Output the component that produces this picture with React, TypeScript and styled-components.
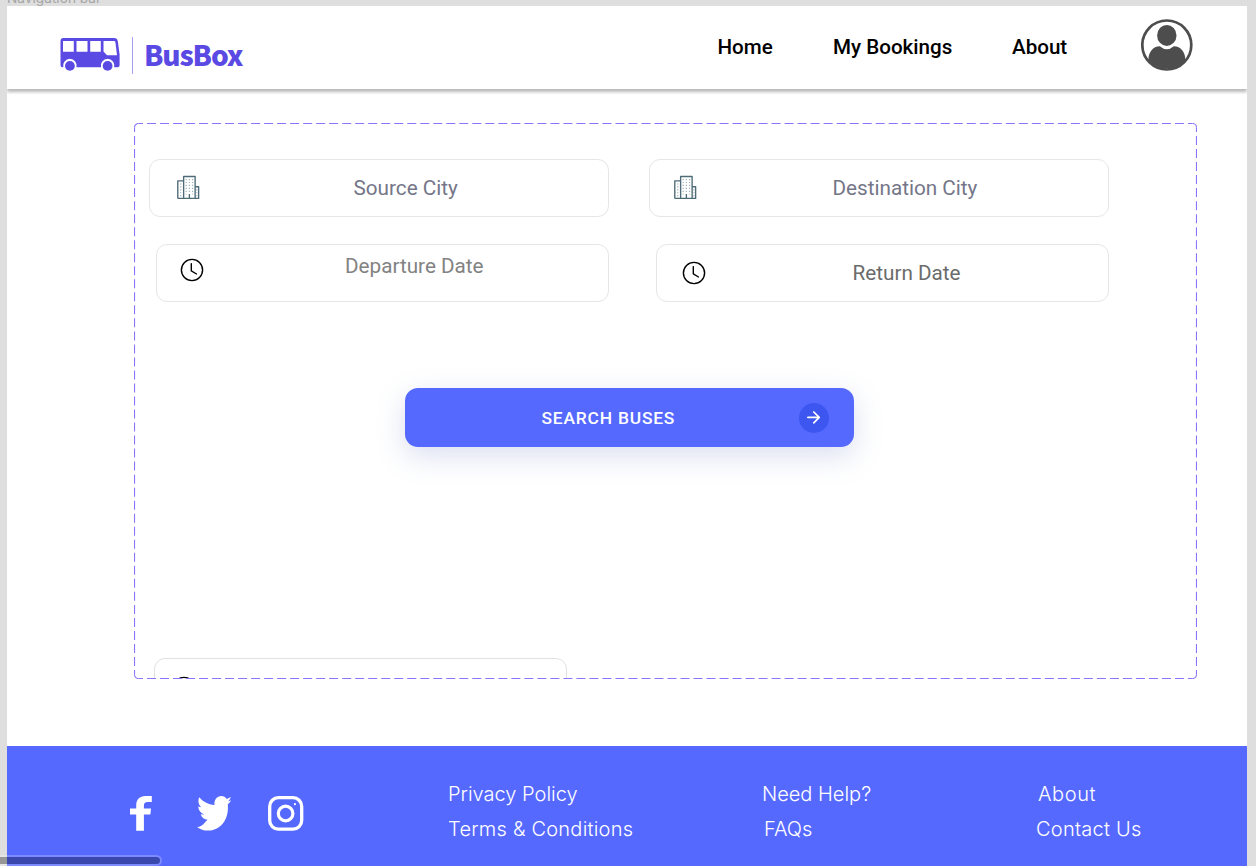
import React from "react";
import styled, { createGlobalStyle } from "styled-components";

const GlobalStyle = createGlobalStyle`
  *, *::before, *::after { box-sizing: border-box; }
  body { margin: 0; background: #dedede; font-family: Roboto, "Liberation Sans", sans-serif; }
  a { color: inherit; text-decoration: none; }
  svg { display: block; flex: none; }
`;

const Canvas = styled.div`
  position: relative;
  display: flex;
  flex-direction: column;
  height: 866px;
  padding: 0 9px 0 7px;
  overflow: hidden;
`;

const FrameLabel = styled.div`
  height: 6px;
  flex: none;
  display: flex;
  align-items: flex-end;
  color: #a6a6a6;
  font: 400 13.7px/15px Inter, sans-serif;
  white-space: nowrap;
`;

const Header = styled.header`
  position: relative;
  flex: none;
  display: flex;
  height: 83px;
  padding: 0 54px 0 53px;
  background: #fff;
  box-shadow: 0 3px 3px rgba(0, 0, 0, 0.28);
  clip-path: inset(0 0 -8px 0);
`;

const Brand = styled.a`
  display: flex;
  align-items: flex-start;
  padding-top: 31px;
  color: #5a49e3;
`;

const BrandDivider = styled.span`
  width: 1px;
  height: 37px;
  margin-left: 12px;
  background: #a79ff0;
`;

const BrandName = styled.span`
  margin-left: 11px;
  font: 900 28px/34px "Noto Sans CJK SC", sans-serif;
  letter-spacing: -1.15px;
`;

const Nav = styled.nav`
  display: flex;
  margin-left: auto;
  padding-top: 29px;
  color: #000;
  font-size: 20.6px;
  font-weight: 500;
  line-height: 24px;
  white-space: nowrap;
`;

const NavLink = styled.a<{ $width: number }>`
  width: ${(p) => p.$width}px;
`;

const Avatar = styled.a`
  padding-top: 13px;
`;

const Main = styled.main`
  flex: none;
  height: 657px;
  padding: 34px 50px 0 127px;
  background: #fff;
`;

const SearchPanel = styled.form`
  position: relative;
  display: flex;
  flex-direction: column;
  height: 556px;
  padding: 36px 88.5px 0 15px;
  overflow: hidden;
`;

const Outline = styled.svg`
  position: absolute;
  inset: 0;
  pointer-events: none;
`;

const FieldRow = styled.div<{ $indent?: number }>`
  flex: none;
  display: grid;
  grid-template-columns: 1fr 1fr;
  gap: ${(p) => 39.5 + (p.$indent ?? 0)}px;
  padding-left: ${(p) => p.$indent ?? 0}px;
  margin-bottom: 27px;
`;

const Field = styled.label<{ $icon: number }>`
  display: flex;
  align-items: center;
  height: 58px;
  padding-left: ${(p) => p.$icon}px;
  border: 1px solid #e6e6e6;
  border-radius: 11px;
  background: #fff;
`;

const FieldIcon = styled.span<{ $lift?: number }>`
  margin-bottom: ${(p) => p.$lift ?? 0}px;
`;

const FieldText = styled.span<{ $gap: number; $tone: string; $lift?: number }>`
  margin-left: ${(p) => p.$gap}px;
  margin-bottom: ${(p) => p.$lift ?? 0}px;
  color: ${(p) => p.$tone};
  font-size: 20.7px;
  line-height: 24px;
  white-space: nowrap;
`;

const SearchButton = styled.button`
  flex: none;
  display: flex;
  align-items: center;
  width: 449px;
  height: 59px;
  margin: 59px 0 0 256px;
  padding: 0 25px 0 136.5px;
  border: 0;
  border-radius: 13px;
  background: #5669ff;
  color: #fff;
  font: 500 17.4px/20px Roboto, sans-serif;
  letter-spacing: 0.8px;
  box-shadow: 0 9px 28px rgba(111, 126, 201, 0.25);
`;

const ArrowBadge = styled.span`
  display: grid;
  place-items: center;
  width: 30px;
  height: 30px;
  margin-left: auto;
  border-radius: 50%;
  background: #3d56f0;
`;

const ClippedField = styled.div`
  flex: none;
  width: 413px;
  height: 59px;
  margin: 211px 0 0 5px;
  padding: 17px 0 0 17px;
  border: 1px solid #e2e2e2;
  border-radius: 11px;
`;

const Footer = styled.footer`
  flex: none;
  display: flex;
  height: 120px;
  padding-left: 122px;
  background: #5669ff;
  color: #fff;
`;

const Socials = styled.div`
  display: flex;
  width: 319px;
  padding-top: 50px;
`;

const SocialLink = styled.a<{ $width: number }>`
  width: ${(p) => p.$width}px;
`;

const LinkColumn = styled.div<{ $width: number }>`
  display: flex;
  flex-direction: column;
  width: ${(p) => p.$width}px;
  padding-top: 31px;
  font: 300 20px/34.5px Inter, sans-serif;
  white-space: nowrap;
`;

const FooterLink = styled.a<{ $track?: number; $shift?: number }>`
  padding-left: ${(p) => p.$shift ?? 0}px;
  letter-spacing: ${(p) => p.$track ?? 0}px;
`;

const ScrollThumb = styled.div`
  position: absolute;
  left: -8px;
  bottom: 0;
  width: 170px;
  height: 11px;
  border: 2px solid rgba(255, 255, 255, 0.22);
  border-radius: 6px;
  background: rgba(0, 0, 0, 0.32) padding-box;
`;

const BusIcon = () => (
  <svg width="60" height="34" viewBox="0 0 60 34">
    <path
      fill="currentColor"
      fillRule="evenodd"
      d="M3.5 1H54Q57.2 1 57.8 4.2L59.6 17.5V28Q59.6 30.3 57.5 30.3H54.2A6.8 6.8 0 1 0 41 30.3H16.5A6.8 6.8 0 1 0 3.3 30.3H2.5Q.5 30.3 .5 28V4Q.5 1 3.5 1ZM3 4V14.8H13.8V4ZM16.5 4V14.8H27.5V4ZM30.2 4V14.8H40.8V4ZM43.5 4V14.5L47 18.2H57L55.4 5.2Q55.2 4 54 4Z"
    />
    <circle cx="9.9" cy="28.9" r="4.9" fill="currentColor" />
    <circle cx="47.6" cy="28.9" r="4.9" fill="currentColor" />
  </svg>
);

const UserIcon = () => (
  <svg width="52" height="52" viewBox="0 0 52 52">
    <circle cx="25.8" cy="26" r="24.5" fill="none" stroke="#4d4d4d" strokeWidth="2.7" />
    <ellipse cx="25.8" cy="16.4" rx="9.7" ry="10.5" fill="#4d4d4d" />
    <path fill="#4d4d4d" d="M7.4 41C7.4 33 12 27.2 18.8 27.2Q25.8 33.2 32.8 27.2C39.8 27.2 44.4 33 44.4 41A24.4 24.4 0 0 1 7.4 41Z" />
  </svg>
);

const CityIcon = () => (
  <svg width="23" height="25" viewBox="0 0 23.6 25.4" fill="none">
    <g stroke="#4f6b78" strokeWidth="1.4" strokeLinejoin="round">
      <path d="M.8 23.9V5.9H6.7M18.6 11.9H22.2V23.9H.8" />
      <path d="M6.8 23.9V1.4H18.6V23.9" />
      <path d="M12.7 19.4V23.6" />
    </g>
    <path stroke="#a3b5bc" strokeWidth="1.3" strokeDasharray="1.2 1.8" d="M9.4 4V20M12.7 4V18M16 4V20M3.8 8.5V22M20.4 14.5V22" />
  </svg>
);

const ClockIcon = () => (
  <svg width="24" height="24" viewBox="0 0 24 24" fill="none" stroke="#000" strokeWidth="1.4" strokeLinecap="round">
    <circle cx="12" cy="12" r="10.6" />
    <path d="M11.3 5.6V12.9L16.5 16" />
  </svg>
);

const ArrowIcon = () => (
  <svg width="14" height="14" viewBox="0 0 14 14" fill="none" stroke="#fff" strokeWidth="1.7" strokeLinecap="round" strokeLinejoin="round">
    <path d="M.8 6.4H12.2M6.8 1L12.2 6.4L6.8 11.8" />
  </svg>
);

const FacebookIcon = () => (
  <svg width="24" height="36" viewBox="0 0 24 36" fill="#fff">
    <path d="M7.2 34.7V18.6H1V12.6H7.2V9.5C7.2 3.5 10.7 0 16.4 0H22.8V6H18.6C16 6 14.9 7.2 14.9 9.8V12.6H22L21.4 18.6H14.9V34.7Z" />
  </svg>
);

const TwitterIcon = () => (
  <svg width="36" height="36" viewBox="0 0 36 36" fill="#fff">
    <path d="M34.2 4.3C33.2 4.8 32.2 5.2 31.1 5.4C32.4 4.4 33.4 2.6 33.8 1.1C32.6 1.9 31.2 2.6 29.8 2.9C28.4 1.1 26.6 0 24.4 0C20 0 16.8 4 17.5 8.9C11.3 8.5 5.8 5.3 2.3 1.2C.7 4.5 1.3 8.6 4.3 11.3C3.2 11.2 2.1 10.8 1.3 10.3C1.4 14.2 3.7 17.2 7 18.2C6 18.5 4.9 18.5 3.7 18.3C4.7 21.5 7.3 23.6 10.6 23.8C7.8 26.2 5 31.4 0 30.9C3.2 33.3 6.8 34.6 10.8 34.6C23.4 34.6 31.3 23.9 30.9 11.2C30.9 9.9 30.9 9 30.8 8.3C32.4 7.2 33.5 5.7 34.2 4.3Z" />
  </svg>
);

const InstagramIcon = () => (
  <svg width="36" height="36" viewBox="0 0 36 36" fill="none" stroke="#fff">
    <rect x="1.7" y="1.7" width="32" height="31.4" rx="8.7" strokeWidth="3.3" />
    <circle cx="17.6" cy="17.5" r="7.3" strokeWidth="3.2" />
    <circle cx="26.9" cy="8.2" r="1.1" fill="#fff" stroke="none" />
  </svg>
);

const PanelOutline = () => (
  <Outline width="1063" height="556" viewBox="0 0 1063 556" fill="none" stroke="#8b74fb" strokeWidth="1.15">
    <path strokeDasharray="9 4.012" strokeDashoffset="4.5" d="M4.5 .5H1058.5" />
    <path strokeDasharray="9 4.012" strokeDashoffset="4.5" d="M4.5 555.5H1058.5" />
    <path strokeDasharray="9 4.024" strokeDashoffset="4.5" d="M.5 4.5V551.5" />
    <path strokeDasharray="9 4.024" strokeDashoffset="4.5" d="M1062.5 4.5V551.5" />
    <path d="M.5 4.5A4 4 0 0 1 4.5 .5M1058.5 .5A4 4 0 0 1 1062.5 4.5M1062.5 551.5A4 4 0 0 1 1058.5 555.5M4.5 555.5A4 4 0 0 1 .5 551.5" />
  </Outline>
);

export default function App() {
  return (
    <>
      <GlobalStyle />
      <Canvas>
        <FrameLabel>Navigation bar</FrameLabel>
        <Header>
          <Brand href="#">
            <BusIcon />
            <BrandDivider />
            <BrandName>BusBox</BrandName>
          </Brand>
          <Nav>
            <NavLink href="#" $width={115.5}>Home</NavLink>
            <NavLink href="#" $width={179}>My Bookings</NavLink>
            <NavLink href="#" $width={129}>About</NavLink>
          </Nav>
          <Avatar href="#">
            <UserIcon />
          </Avatar>
        </Header>
        <Main>
          <SearchPanel>
            <FieldRow>
              <Field $icon={27}>
                <FieldIcon $lift={1}><CityIcon /></FieldIcon>
                <FieldText $gap={153.5} $tone="#747688">Source City</FieldText>
              </Field>
              <Field $icon={24.5}>
                <FieldIcon $lift={1}><CityIcon /></FieldIcon>
                <FieldText $gap={135.5} $tone="#747688">Destination City</FieldText>
              </Field>
            </FieldRow>
            <FieldRow $indent={7}>
              <Field $icon={23}>
                <FieldIcon $lift={6}><ClockIcon /></FieldIcon>
                <FieldText $gap={141} $tone="#828282" $lift={14}>Departure Date</FieldText>
              </Field>
              <Field $icon={25.5}>
                <FieldIcon $lift={1}><ClockIcon /></FieldIcon>
                <FieldText $gap={146.5} $tone="#6b6b6b">Return Date</FieldText>
              </Field>
            </FieldRow>
            <SearchButton type="button">
              SEARCH BUSES
              <ArrowBadge>
                <ArrowIcon />
              </ArrowBadge>
            </SearchButton>
            <ClippedField>
              <ClockIcon />
            </ClippedField>
            <PanelOutline />
          </SearchPanel>
        </Main>
        <Footer>
          <Socials>
            <SocialLink href="#" $width={68}><FacebookIcon /></SocialLink>
            <SocialLink href="#" $width={71}><TwitterIcon /></SocialLink>
            <SocialLink href="#" $width={36}><InstagramIcon /></SocialLink>
          </Socials>
          <LinkColumn $width={314}>
            <FooterLink href="#">Privacy Policy</FooterLink>
            <FooterLink href="#" $track={0.23}>Terms &amp; Conditions</FooterLink>
          </LinkColumn>
          <LinkColumn $width={274}>
            <FooterLink href="#">Need Help?</FooterLink>
            <FooterLink href="#" $shift={2}>FAQs</FooterLink>
          </LinkColumn>
          <LinkColumn $width={120}>
            <FooterLink href="#" $shift={2} $track={0.6}>About</FooterLink>
            <FooterLink href="#" $track={0.25}>Contact Us</FooterLink>
          </LinkColumn>
        </Footer>
        <ScrollThumb />
      </Canvas>
    </>
  );
}
